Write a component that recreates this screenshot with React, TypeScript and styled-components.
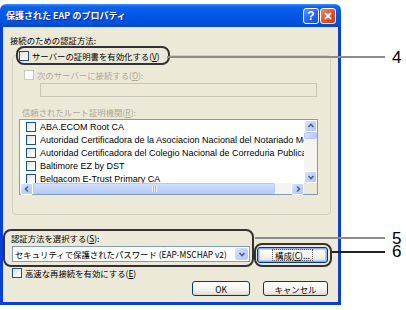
import React from 'react';
import styled, { createGlobalStyle } from 'styled-components';

const UI_FONT = `'Noto Sans CJK JP', 'Liberation Sans', sans-serif`;
const LIST_FONT = `'Liberation Sans', 'Noto Sans CJK JP', sans-serif`;

const GlobalStyle = createGlobalStyle`
    html, body {
        margin: 0;
        padding: 0;
        background: #fff;
    }
    body {
        font-family: ${UI_FONT};
    }
`;

const Page = styled.div`
    position: relative;
    width: 406px;
    height: 310px;
    padding-top: 4px;
    box-sizing: border-box;
    overflow: hidden;
    background: #fff;
`;

const Window = styled.div`
    width: 341px;
`;

const TitleBar = styled.div`
    height: 23px;
    box-sizing: border-box;
    padding: 0 5px 0 6px;
    display: flex;
    align-items: center;
    justify-content: space-between;
    border-radius: 6px 6px 0 0;
    background: linear-gradient(
        to bottom,
        #3d8ff8 0%,
        #0d62ec 12%,
        #0457e6 45%,
        #0053e0 80%,
        #0247c9 100%
    );
`;

const TitleText = styled.span`
    color: #fff;
    font: bold 9px ${UI_FONT};
    text-shadow: 1px 1px 0 #0b2a95;
    white-space: nowrap;
`;

const TitleButtons = styled.div`
    display: flex;
    gap: 1px;
`;

const CaptionButton = styled.div<{ $tone: 'help' | 'close' }>`
    width: 16px;
    height: 16px;
    box-sizing: border-box;
    border: 1px solid #fff;
    border-radius: 3px;
    display: flex;
    align-items: center;
    justify-content: center;
    color: #fff;
    font: bold 12px 'Liberation Sans', sans-serif;
    background: ${(p) =>
        p.$tone === 'help'
            ? 'linear-gradient(135deg, #5f98ff 0%, #2a66ef 50%, #1a4fd6 100%)'
            : 'linear-gradient(135deg, #f08a6a 0%, #e0552e 50%, #c63d18 100%)'};
`;

const Body = styled.div`
    height: 278px;
    box-sizing: border-box;
    background: #ece9d8;
    border: 3px solid #0a3fd6;
    border-top: 0;
    display: flex;
    flex-direction: column;
    align-items: flex-start;
`;

const Caption = styled.div<{ $disabled?: boolean; $left: number; $top: number }>`
    margin: ${(p) => p.$top}px 0 0 ${(p) => p.$left}px;
    height: 12px;
    line-height: 12px;
    font-size: 8.4px;
    white-space: nowrap;
    color: ${(p) => (p.$disabled ? '#aca899' : '#000')};
`;

const Group = styled.fieldset`
    margin: 0 0 0 9px;
    padding: 0 0 19px 0;
    width: 319px;
    min-width: 0;
    box-sizing: border-box;
    border: 1px solid #d0d0bf;
    border-radius: 4px;
    display: flex;
    flex-direction: column;
    align-items: flex-start;
`;

const CalloutLegend = styled.legend`
    margin-left: 3px;
    padding: 0 8px 0 1px;
    height: 19px;
    box-sizing: border-box;
    border: 2px solid #333;
    border-radius: 8px;
    display: flex;
    align-items: center;
`;

const CheckRow = styled.div<{ $disabled?: boolean; $left?: number; $top?: number }>`
    margin: ${(p) => p.$top ?? 0}px 0 0 ${(p) => p.$left ?? 0}px;
    height: 12px;
    display: flex;
    align-items: center;
    gap: 3px;
    font-size: 8.4px;
    white-space: nowrap;
    color: ${(p) => (p.$disabled ? '#aca899' : '#000')};
`;

const Box = styled.span<{ $disabled?: boolean }>`
    flex: none;
    width: 10px;
    height: 10px;
    box-sizing: border-box;
    border: 1px solid ${(p) => (p.$disabled ? '#cac8bb' : '#1c5180')};
    background: ${(p) => (p.$disabled ? '#fff' : 'linear-gradient(135deg, #dcdcd7 0%, #f6f6f4 60%, #fff 100%)')};
`;

const DisabledField = styled.div`
    margin: 2px 0 0 27px;
    width: 277px;
    height: 14px;
    box-sizing: border-box;
    border: 1px solid #c9c7ba;
    background: #ece9d8;
`;

const ListBox = styled.div`
    margin: 1px 0 0 6px;
    width: 299px;
    height: 76px;
    box-sizing: border-box;
    border: 1px solid #7f9db9;
    background: #fff;
    display: grid;
    grid-template-columns: 1fr 13px;
    grid-template-rows: 1fr 11px;
`;

const ListRows = styled.div`
    overflow: hidden;
    padding-left: 6px;
`;

const ListItem = styled.div`
    height: 13px;
    display: flex;
    align-items: center;
    gap: 4px;
    font: 9px ${LIST_FONT};
    white-space: nowrap;
    color: #000;
`;

const ScrollBar = styled.div<{ $dir: 'v' | 'h' }>`
    display: flex;
    flex-direction: ${(p) => (p.$dir === 'v' ? 'column' : 'row')};
    background: #f5f4ee;
`;

const ScrollButton = styled.div`
    flex: none;
    width: 13px;
    height: 12px;
    box-sizing: border-box;
    border: 1px solid #fff;
    border-radius: 2px;
    background: linear-gradient(135deg, #d6e3fe 0%, #c1d3fb 50%, #b3c8f5 100%);
    display: flex;
    align-items: center;
    justify-content: center;
`;

const Thumb = styled.div<{ $dir: 'v' | 'h'; $size: number }>`
    flex: none;
    ${(p) => (p.$dir === 'v' ? `height: ${p.$size}px;` : `width: ${p.$size}px;`)}
    box-sizing: border-box;
    border: 1px solid #b4c8f6;
    border-radius: 2px;
    background: linear-gradient(${(p) => (p.$dir === 'v' ? '90deg' : '180deg')}, #d0defd 0%, #c4d5fc 50%, #b7cbf8 100%);
    display: flex;
    align-items: center;
    justify-content: center;
`;

const Track = styled.div`
    flex: 1;
`;

const Corner = styled.div`
    background: #ece9d8;
`;

const Grip = styled.span`
    width: 5px;
    height: 6px;
    background: repeating-linear-gradient(90deg, #eef4fe 0 1px, #8cb0f8 1px 2px);
`;

const SelectRow = styled.div`
    margin-top: 14px;
    display: flex;
    align-items: flex-end;
`;

const CalloutBox = styled.div<{ $w: number; $h: number; $pad: string }>`
    width: ${(p) => p.$w}px;
    height: ${(p) => p.$h}px;
    box-sizing: border-box;
    padding: ${(p) => p.$pad};
    border: 2px solid #333;
    border-radius: 8px;
    display: flex;
    flex-direction: column;
    align-items: flex-start;
`;

const Combo = styled.div`
    margin: 2px 0 0 1px;
    width: 238px;
    height: 16px;
    box-sizing: border-box;
    border: 1px solid #7f9db9;
    background: #fff;
    display: flex;
    align-items: stretch;
`;

const ComboText = styled.div`
    flex: 1;
    padding-left: 2px;
    font-size: 8.4px;
    line-height: 14px;
    white-space: nowrap;
    overflow: hidden;
`;

const ComboArrow = styled.div`
    flex: none;
    width: 13px;
    margin: 1px;
    border-radius: 2px;
    background: linear-gradient(135deg, #d6e3fe 0%, #c1d3fb 50%, #b3c8f5 100%);
    display: flex;
    align-items: center;
    justify-content: center;
`;

const PushButton = styled.button<{ $w: number; $focused?: boolean }>`
    width: ${(p) => p.$w}px;
    height: ${(p) => (p.$focused ? 16 : 15)}px;
    box-sizing: border-box;
    padding: 0;
    border: 1px solid #003c74;
    border-radius: 3px;
    background: linear-gradient(to bottom, #fff 0%, #f4f3ee 60%, #e6e3d8 90%, #d6d0c5 100%);
    box-shadow: ${(p) => (p.$focused ? 'inset 0 0 0 1px #8caaf0, inset 0 0 0 2px #bccff8' : 'none')};
    font: 8.4px ${UI_FONT};
    color: #000;
    display: flex;
    align-items: center;
    justify-content: center;
`;

const FocusText = styled.span`
    outline: 1px dotted #555;
    padding: 0 2px;
    line-height: 10px;
`;

const ButtonRow = styled.div`
    margin-top: 2px;
    align-self: stretch;
    padding-right: 10px;
    display: flex;
    justify-content: flex-end;
    gap: 13px;
`;

const Leader = styled.div<{ $top: number; $left: number; $width: number; $dark?: boolean }>`
    position: absolute;
    top: ${(p) => p.$top}px;
    left: ${(p) => p.$left}px;
    width: ${(p) => p.$width}px;
    height: 2px;
    background: ${(p) => (p.$dark ? '#222' : '#8c8c8c')};
`;

const Marker = styled.div<{ $top: number }>`
    position: absolute;
    top: ${(p) => p.$top}px;
    left: 392px;
    font: 17px 'Liberation Sans', Arial, sans-serif;
    line-height: 13px;
    color: #000;
`;

const Chevron = ({ dir }: { dir: 'up' | 'down' | 'left' | 'right' }) => {
    const d = {
        up: 'M1.5 5 L4 2.5 L6.5 5',
        down: 'M1.5 3 L4 5.5 L6.5 3',
        left: 'M5 1.5 L2.5 4 L5 6.5',
        right: 'M3 1.5 L5.5 4 L3 6.5',
    }[dir];
    return (
        <svg width="8" height="8" viewBox="0 0 8 8">
            <path d={d} fill="none" stroke="#4d6185" strokeWidth="1.6" />
        </svg>
    );
};

const authorities = [
    'ABA.ECOM Root CA',
    'Autoridad Certificadora de la Asociacion Nacional del Notariado Mexicano',
    'Autoridad Certificadora del Colegio Nacional de Correduria Publica Mexicana',
    'Baltimore EZ by DST',
    'Belgacom E-Trust Primary CA',
];

const callouts = [
    { n: '4', line: { top: 56, left: 167, width: 218 }, top: 51 },
    { n: '5', line: { top: 237, left: 255, width: 130 }, top: 232 },
    { n: '6', line: { top: 251, left: 332, width: 53, dark: true }, top: 245 },
];

export default function App() {
    return (
        <>
            <GlobalStyle />
            <Page>
                <Window>
                    <TitleBar>
                        <TitleText>保護された EAP のプロパティ</TitleText>
                        <TitleButtons>
                            <CaptionButton $tone="help">?</CaptionButton>
                            <CaptionButton $tone="close">
                                <svg width="10" height="10" viewBox="0 0 10 10">
                                    <path d="M2 2 L8 8 M8 2 L2 8" stroke="#fff" strokeWidth="1.8" />
                                </svg>
                            </CaptionButton>
                        </TitleButtons>
                    </TitleBar>
                    <Body>
                        <Caption $left={7} $top={7}>
                            接続のための認証方法:
                        </Caption>
                        <Group>
                            <CalloutLegend>
                                <CheckRow>
                                    <Box />
                                    <span>
                                        サーバーの証明書を有効化する(<u>V</u>)
                                    </span>
                                </CheckRow>
                            </CalloutLegend>
                            <CheckRow $disabled $left={11} $top={4}>
                                <Box $disabled />
                                <span>
                                    次のサーバーに接続する(<u>O</u>):
                                </span>
                            </CheckRow>
                            <DisabledField />
                            <Caption $disabled $left={9} $top={9}>
                                信頼されたルート証明機関(<u>R</u>):
                            </Caption>
                            <ListBox>
                                <ListRows>
                                    {authorities.map((name) => (
                                        <ListItem key={name}>
                                            <Box />
                                            {name}
                                        </ListItem>
                                    ))}
                                </ListRows>
                                <ScrollBar $dir="v">
                                    <ScrollButton>
                                        <Chevron dir="up" />
                                    </ScrollButton>
                                    <Thumb $dir="v" $size={7} />
                                    <Track />
                                    <ScrollButton>
                                        <Chevron dir="down" />
                                    </ScrollButton>
                                </ScrollBar>
                                <ScrollBar $dir="h">
                                    <ScrollButton>
                                        <Chevron dir="left" />
                                    </ScrollButton>
                                    <Thumb $dir="h" $size={242}>
                                        <Grip />
                                    </Thumb>
                                    <Track />
                                    <ScrollButton>
                                        <Chevron dir="right" />
                                    </ScrollButton>
                                </ScrollBar>
                                <Corner />
                            </ListBox>
                        </Group>
                        <SelectRow>
                            <CalloutBox $w={251} $h={38} $pad="1px 3px 0 6px">
                                <Caption $left={0} $top={0}>
                                    認証方法を選択する(<u>S</u>):
                                </Caption>
                                <Combo>
                                    <ComboText>セキュリティで保護されたパスワード (EAP-MSCHAP v2)</ComboText>
                                    <ComboArrow>
                                        <Chevron dir="down" />
                                    </ComboArrow>
                                </Combo>
                            </CalloutBox>
                            <CalloutBox $w={78} $h={24} $pad="2px 0 0 1px">
                                <PushButton $w={71} $focused>
                                    <FocusText>
                                        構成(<u>C</u>)...
                                    </FocusText>
                                </PushButton>
                            </CalloutBox>
                        </SelectRow>
                        <CheckRow $left={9} $top={0}>
                            <Box />
                            <span>
                                高速な再接続を有効にする(<u>E</u>)
                            </span>
                        </CheckRow>
                        <ButtonRow>
                            <PushButton $w={58}>OK</PushButton>
                            <PushButton $w={65}>キャンセル</PushButton>
                        </ButtonRow>
                    </Body>
                </Window>
                {callouts.map((c) => (
                    <React.Fragment key={c.n}>
                        <Leader $top={c.line.top} $left={c.line.left} $width={c.line.width} $dark={c.line.dark} />
                        <Marker $top={c.top}>{c.n}</Marker>
                    </React.Fragment>
                ))}
            </Page>
        </>
    );
}
